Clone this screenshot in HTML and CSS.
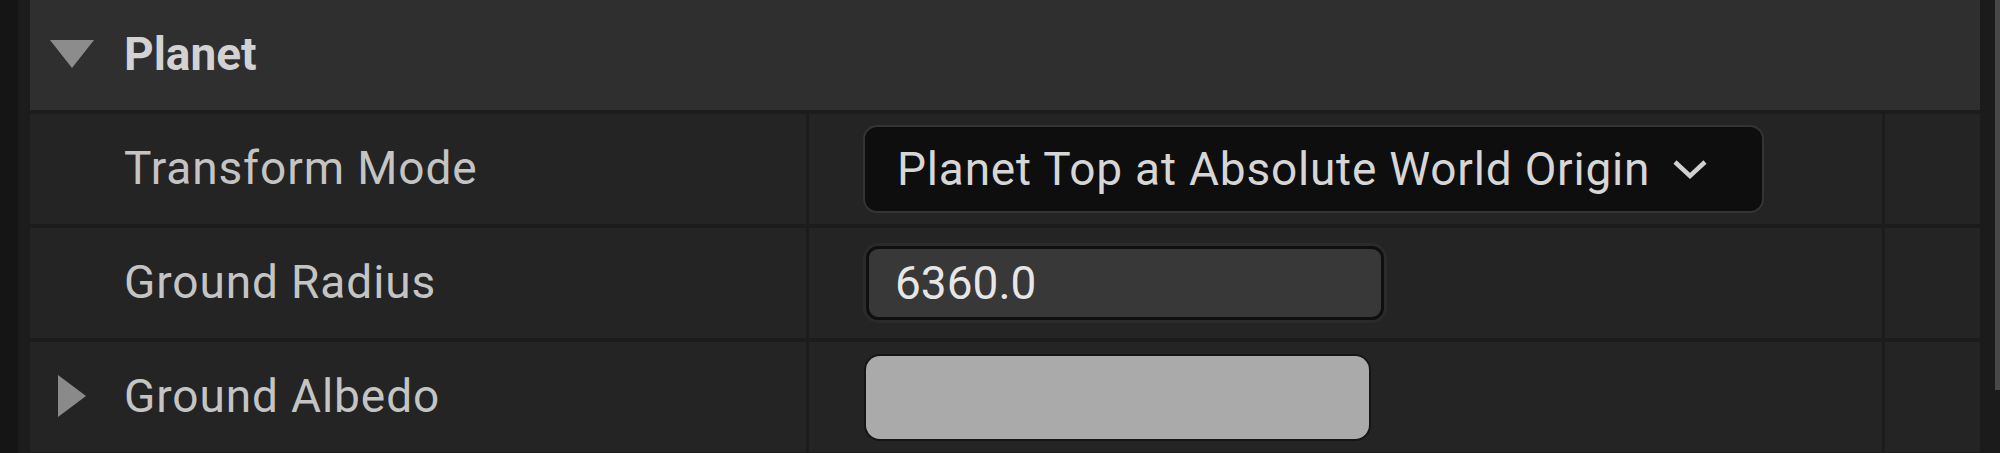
FILE: index.html
```html
<!DOCTYPE html>
<html lang="en">
<head>
    <meta charset="UTF-8">
    <title>Details - Planet</title>
    <link rel="stylesheet" href="styles.css">
</head>
<body>
    <div class="editor">
        <div class="edge"></div>
        <div class="panel">
            <div class="category">
                <span class="arrow-down"></span>
                <span class="category-name">Planet</span>
            </div>
            <div class="row">
                <div class="cell name">Transform Mode</div>
                <div class="cell value">
                    <div class="combo">
                        <span>Planet Top at Absolute World Origin</span>
                        <svg class="chevron" width="36" height="24" viewBox="0 0 36 24">
                            <path d="M3 5 L18 19 L33 5" fill="none" stroke="#d0d0d0" stroke-width="4.5"/>
                        </svg>
                    </div>
                </div>
                <div class="cell extra"></div>
            </div>
            <div class="row">
                <div class="cell name">Ground Radius</div>
                <div class="cell value">
                    <div class="numbox">6360.0</div>
                </div>
                <div class="cell extra"></div>
            </div>
            <div class="row">
                <div class="cell name"><span class="arrow-right"></span>Ground Albedo</div>
                <div class="cell value">
                    <div class="swatch"></div>
                </div>
                <div class="cell extra"></div>
            </div>
        </div>
        <div class="gutter">
            <div class="thumb"></div>
        </div>
    </div>
</body>
</html>
```

FILE: styles.css
```css
body {
    margin: 0;
    height: 453px;
    overflow: hidden;
    background-color: #1b1b1b;
    font-family: Roboto, "Liberation Sans", sans-serif;
    font-size: 46px;
}
.editor {
    display: flex;
    height: 100%;
}
.edge {
    width: 18px;
    background-color: #151515;
}
.panel {
    flex: 1;
    display: flex;
    flex-direction: column;
    gap: 4px;
    padding-left: 12px;
    background-color: #1c1c1c;
}
.category {
    display: flex;
    align-items: center;
    height: 110px;
    flex-shrink: 0;
    padding-left: 20px;
    padding-bottom: 3px;
    box-sizing: border-box;
    background-color: #2f2f2f;
}
.arrow-down {
    width: 0;
    height: 0;
    border-left: 22px solid transparent;
    border-right: 22px solid transparent;
    border-top: 28px solid #8c8c8c;
    margin-right: 30px;
}
.category-name {
    font-weight: bold;
    color: #d2d2d2;
}
.row {
    display: grid;
    grid-template-columns: 776px 1fr 95px;
    column-gap: 3px;
    height: 110px;
    flex-shrink: 0;
}
.cell {
    background-color: #242424;
    display: flex;
    align-items: center;
}
.name {
    padding-left: 94px;
    padding-bottom: 2px;
    box-sizing: border-box;
    color: #c4c4c4;
    letter-spacing: 0.9px;
    position: relative;
}
.arrow-right {
    position: absolute;
    left: 28px;
    width: 0;
    height: 0;
    border-top: 21px solid transparent;
    border-bottom: 21px solid transparent;
    border-left: 28px solid #8a8a8a;
}
.value {
    padding-left: 54px;
}
.combo {
    display: flex;
    align-items: center;
    gap: 22px;
    box-sizing: border-box;
    width: 901px;
    height: 88px;
    padding: 0 0 0 32px;
    background-color: #0e0e0e;
    border: 2px solid #343434;
    border-radius: 14px;
    color: #d6d6d6;
    letter-spacing: 0.8px;
}
.chevron {
    display: block;
}
.numbox {
    box-sizing: border-box;
    width: 518px;
    height: 74px;
    margin-left: 3px;
    display: flex;
    align-items: center;
    padding-left: 26px;
    background-color: #383838;
    border: 3px solid #0f0f0f;
    border-radius: 12px;
    box-shadow: 0 0 0 3px #2b2b2b;
    color: #e6e6e6;
}
.swatch {
    margin-left: 3px;
    width: 503px;
    height: 83px;
    background-color: #aaaaaa;
    border-radius: 14px;
    box-shadow: 0 0 0 2px #151515;
}
.gutter {
    width: 20px;
    display: flex;
    justify-content: flex-end;
    background-color: #1b1b1b;
}
.thumb {
    width: 5px;
    height: 390px;
    background-color: #484848;
}
```
